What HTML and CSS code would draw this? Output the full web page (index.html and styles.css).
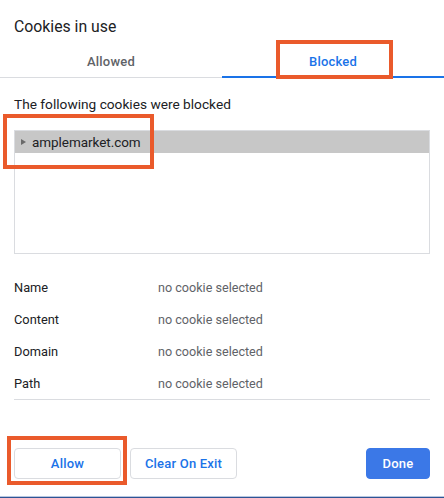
FILE: index.html
```html
<!DOCTYPE html>
<html>
<head>
<meta charset="utf-8">
<link rel="stylesheet" href="styles.css">
</head>
<body>
<div class="dialog">
  <h1 class="title">Cookies in use</h1>
  <div class="tabs">
    <div class="tab">Allowed</div>
    <div class="tab active">Blocked</div>
  </div>
  <div class="content">
    <p class="intro">The following cookies were blocked</p>
    <div class="tree">
      <div class="tree-row selected">
        <span class="caret"></span>
        <span class="site">amplemarket.com</span>
      </div>
    </div>
    <dl class="details">
      <div class="detail"><dt>Name</dt><dd>no cookie selected</dd></div>
      <div class="detail"><dt>Content</dt><dd>no cookie selected</dd></div>
      <div class="detail"><dt>Domain</dt><dd>no cookie selected</dd></div>
      <div class="detail"><dt>Path</dt><dd>no cookie selected</dd></div>
    </dl>
    <div class="actions">
      <button class="btn">Allow</button>
      <button class="btn">Clear On Exit</button>
      <span class="spacer"></span>
      <button class="btn primary">Done</button>
    </div>
  </div>
  <div class="mark mark-tab"></div>
  <div class="mark mark-site"></div>
  <div class="mark mark-allow"></div>
  <div class="bottom-edge"></div>
</div>
</body>
</html>
```

FILE: styles.css
```css
* { box-sizing: border-box; }
html, body {
  margin: 0;
  padding: 0;
  background: #ffffff;
}
body {
  font-family: Roboto, "Liberation Sans", Arial, sans-serif;
  color: #202124;
}
.dialog {
  position: relative;
  width: 444px;
  height: 498px;
  overflow: hidden;
  background: #fff;
}
.title {
  margin: 0;
  padding: 17px 14px 0;
  font-size: 15.8px;
  line-height: 20px;
  font-weight: 400;
  color: #202124;
}
.tabs {
  display: grid;
  grid-template-columns: 222px 222px;
  margin-top: 7px;
}
.tab {
  height: 34px;
  padding-top: 9px;
  text-align: center;
  font-size: 13px;
  line-height: 18px;
  font-weight: 500;
  letter-spacing: 0.2px;
  color: #5f6368;
  border-bottom: 1px solid #dadce0;
}
.tab.active {
  color: #1a73e8;
  border-bottom: 2px solid #1a73e8;
}
.content {
  padding: 0 14px;
}
.intro {
  margin: 17px 0 0;
  font-size: 13.7px;
  line-height: 18px;
  color: #202124;
}
.tree {
  margin-top: 17px;
  height: 124px;
  border: 1px solid #dadce0;
}
.tree-row {
  display: flex;
  align-items: center;
  height: 22px;
}
.tree-row.selected {
  background: #c7c7c7;
}
.caret {
  width: 0;
  height: 0;
  margin-left: 6px;
  border-top: 3.5px solid transparent;
  border-bottom: 3.5px solid transparent;
  border-left: 5px solid #6a6a6a;
}
.site {
  margin-left: 6px;
  font-size: 13.5px;
  line-height: 20px;
  letter-spacing: -0.05px;
  color: #202124;
}
.details {
  margin: 17px 0 0;
  padding: 0;
  border-bottom: 1px solid #dadce0;
}
.detail {
  display: grid;
  grid-template-columns: 144px 1fr;
  height: 32px;
  align-items: center;
}
.detail dt {
  font-size: 12.8px;
  color: #202124;
}
.detail dd {
  margin: 0;
  font-size: 12.6px;
  color: #5f6368;
}
.actions {
  display: flex;
  align-items: center;
  gap: 9px;
  margin-top: 48px;
}
.spacer { flex: 1; }
.btn {
  height: 31px;
  padding: 0;
  border: 1px solid #dadce0;
  border-radius: 4px;
  background: #fff;
  color: #1a73e8;
  font-family: inherit;
  font-size: 13px;
  font-weight: 500;
  letter-spacing: 0.2px;
}
.btn:nth-child(1) { width: 107px; }
.btn:nth-child(2) { width: 107px; }
.btn.primary {
  width: 64px;
  background: #3b78e7;
  border-color: #3b78e7;
  color: #fff;
}
.mark {
  position: absolute;
  border: 4.5px solid #ea5a2b;
}
.mark-tab { left: 276px; top: 40px; width: 117px; height: 39px; }
.mark-site { left: 3px; top: 114px; width: 151px; height: 55px; }
.mark-allow { left: 7px; top: 436px; width: 120px; height: 49px; }
.bottom-edge {
  position: absolute;
  left: 0;
  right: 0;
  bottom: 0;
  height: 2px;
  background: #2d5494;
  border-top: 1px solid #b8c7e0;
}
```
